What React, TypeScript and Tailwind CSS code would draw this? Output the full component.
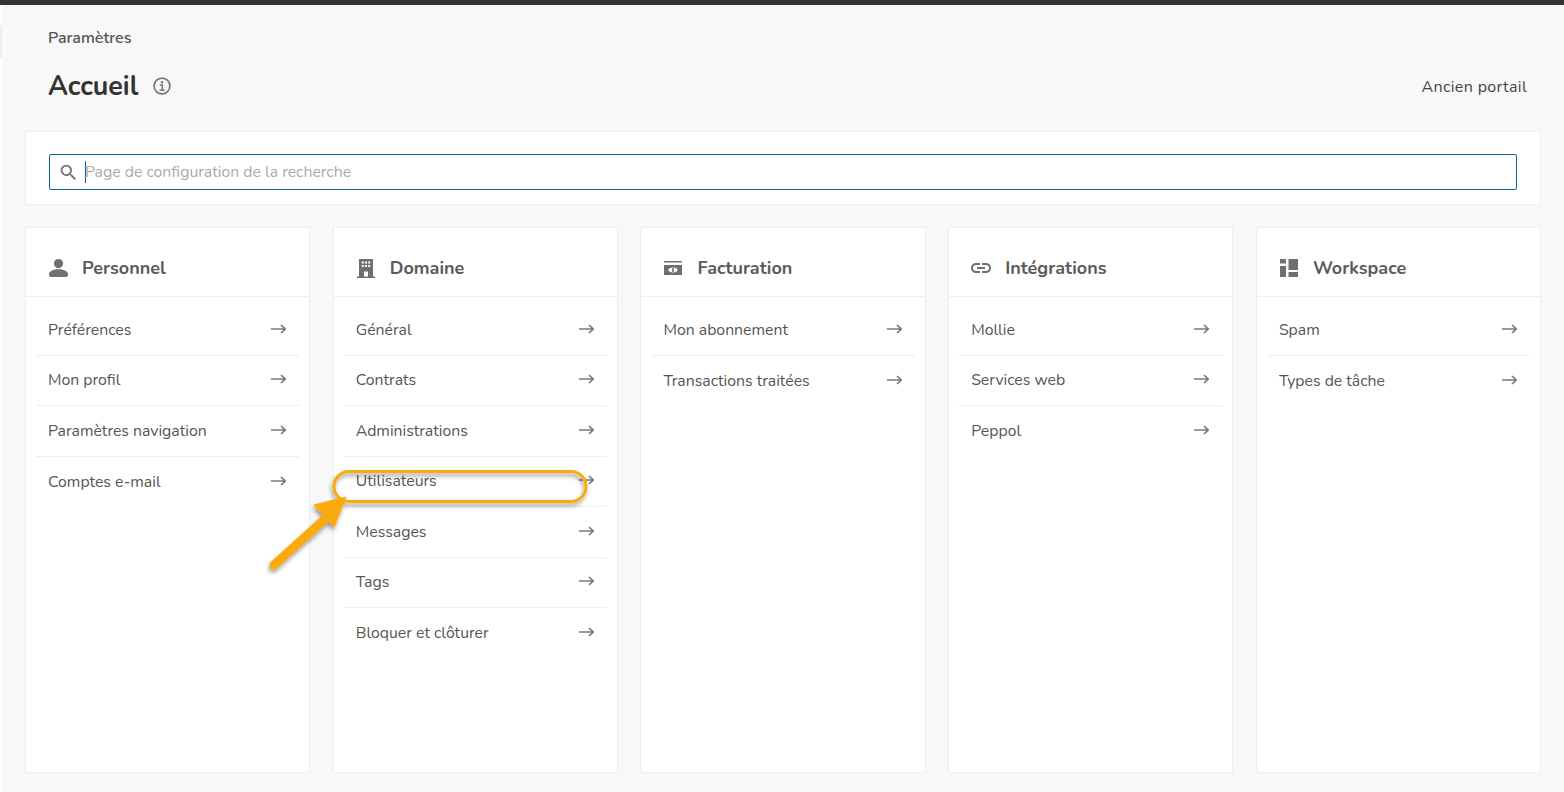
import React from 'react';
import { MdLink, MdSearch } from 'react-icons/md';

const PersonIcon = () => (
  <svg width="19" height="18" viewBox="0 0 19 18" fill="#6f6f6f">
    <circle cx="9.5" cy="4.6" r="4.6" />
    <path d="M0 16v-1c0-3 5-4.8 9.5-4.8S19 12 19 15v1a2 2 0 0 1-2 2H2a2 2 0 0 1-2-2z" />
  </svg>
);

const BuildingIcon = () => (
  <svg width="18" height="19" viewBox="0 0 18 19" fill="#6f6f6f">
    <path fillRule="evenodd" d="M2 0h14v17.5h2V19H0v-1.5h2V0zm2.8 2.4v2h2v-2h-2zm3.2 0v2h2v-2H8zm3.2 0v2h2v-2h-2zM4.8 6v2h2V6h-2zM8 6v2h2V6H8zm3.2 0v2h2V6h-2zM7 12.5v5h4v-5H7z" />
  </svg>
);

const BillingIcon = () => (
  <svg width="18" height="14" viewBox="0 0 18 14" fill="#6f6f6f">
    <rect x="0" y="0" width="18" height="1.5" />
    <path fillRule="evenodd" d="M0 4h18v10H0V4zm9 2.6c-2.6 0-4.6 1-4.6 2.4s2 2.4 4.6 2.4 4.6-1 4.6-2.4-2-2.4-4.6-2.4z" />
    <rect x="8.2" y="7" width="1.6" height="4" />
  </svg>
);

const WorkspaceIcon = () => (
  <svg width="18" height="18" viewBox="0 0 18 18" fill="#6f6f6f">
    <rect x="0" y="0" width="6" height="4.5" />
    <rect x="0" y="7" width="6" height="11" />
    <rect x="8.5" y="0" width="9.5" height="11" />
    <rect x="8.5" y="13" width="9.5" height="5" />
  </svg>
);

const InfoIcon = () => (
  <svg width="18" height="18" viewBox="0 0 18 18" fill="none" stroke="#777" strokeWidth="1.7">
    <circle cx="9" cy="9" r="7.9" />
    <circle cx="9" cy="5.2" r="1.2" fill="#777" stroke="none" />
    <path d="M6.8 8h2.5v5M6.6 13.2h5" strokeWidth="1.5" />
  </svg>
);

const RowArrow = () => (
  <svg width="15" height="10" viewBox="0 0 15 10" fill="none" stroke="#7a7a7a" strokeWidth="1.7" className="-mt-[2px]">
    <path d="M0 5H14M10 1L14.2 5L10 9" />
  </svg>
);

const COLUMNS = [
  { title: 'Personnel', icon: <PersonIcon />, items: ['Préférences', 'Mon profil', 'Paramètres navigation', 'Comptes e-mail'] },
  { title: 'Domaine', icon: <BuildingIcon />, items: ['Général', 'Contrats', 'Administrations', 'Utilisateurs', 'Messages', 'Tags', 'Bloquer et clôturer'] },
  { title: 'Facturation', icon: <BillingIcon />, items: ['Mon abonnement', 'Transactions traitées'] },
  { title: 'Intégrations', icon: <MdLink size={24} color="#6f6f6f" className="shrink-0" />, items: ['Mollie', 'Services web', 'Peppol'] },
  { title: 'Workspace', icon: <WorkspaceIcon />, items: ['Spam', 'Types de tâche'] },
];

function Annotation() {
  return (
    <svg className="absolute left-0 top-0 pointer-events-none" width="1564" height="792" viewBox="0 0 1564 792" fill="none">
      <defs>
        <filter id="shade" x="-20%" y="-40%" width="140%" height="180%">
          <feDropShadow dx="-1" dy="3" stdDeviation="2" floodColor="#000" floodOpacity="0.4" />
        </filter>
      </defs>
      <g filter="url(#shade)">
        <rect x="334" y="471.5" width="252" height="30" rx="15" stroke="#f9ab0b" strokeWidth="3" />
        <path d="M274 565L325 519" stroke="#f9ab0b" strokeWidth="9" strokeLinecap="round" />
        <path d="M346 497L314 505L334 527Z" fill="#f9ab0b" stroke="#f9ab0b" strokeWidth="1" strokeLinejoin="round" />
      </g>
    </svg>
  );
}

export default function App() {
  return (
    <div className="relative h-screen overflow-hidden bg-[#f8f8f8] text-[#4d4d4d] font-['Nunito','Noto_Sans',sans-serif]">
      <div className="h-[5px] bg-[#333333]" />
      <div className="flex">
        <div className="w-[2px] shrink-0 h-[787px] bg-white">
          <div className="mt-[20px] h-[33px] bg-[#eeeeee]" />
        </div>
        <main className="flex-1 min-w-0 pl-[23px] pr-[23px]">
          <div className="pl-[23px] pt-[23px] text-[16px] font-semibold leading-[20px] text-[#555555]">Paramètres</div>
          <div className="flex items-center justify-between pl-[23px] pr-[14px] mt-[18px] h-[40px]">
            <div className="flex items-center gap-[15px]">
              <h1 className="text-[26.8px] font-bold text-[#333333] leading-[40px]">Accueil</h1>
              <InfoIcon />
            </div>
            <span className="pt-[2px] text-[16px] tracking-[0.35px] text-[#444444]">Ancien portail</span>
          </div>
          <div className="mt-[25px] h-[74px] bg-white border border-[#eeeeee] rounded-[2px] px-[23px] pt-[22px]">
            <div className="flex items-center h-[36px] border border-[#05649f] rounded-[2px] pl-[8px] bg-white">
              <MdSearch size={21} color="#707070" className="shrink-0" />
              <span className="ml-[6px] w-px h-[22px] bg-[#05649f]" />
              <input
                readOnly
                placeholder="Page de configuration de la recherche"
                className="flex-1 -ml-px pt-[2px] bg-transparent outline-none text-[15.8px] placeholder:text-[#aaaaaa]"
              />
            </div>
          </div>
          <div className="mt-[22px] grid grid-cols-5 gap-[22.6px] h-[546px]">
            {COLUMNS.map((col) => (
              <section key={col.title} className="bg-white border border-[#eeeeee] rounded-[2px]">
                <header className="flex items-center h-[69px] border-b border-[#eeeeee] pl-[21px] pt-[12px]">
                  <span className="flex items-center justify-center w-[22px] h-[28px]">{col.icon}</span>
                  <h2 className="ml-[13px] text-[18px] font-bold text-[#5a5a5a]">{col.title}</h2>
                </header>
                <ul className="px-[10px] pt-[8px]">
                  {col.items.map((item, i) => (
                    <li
                      key={item}
                      className={`flex items-center justify-between h-[50.5px] pl-[12px] pr-[13px] text-[15.8px] text-[#555555] ${i < col.items.length - 1 ? 'border-b border-[#eeeeee]' : ''}`}
                    >
                      <span className="pt-[2px]">{item}</span>
                      <RowArrow />
                    </li>
                  ))}
                </ul>
              </section>
            ))}
          </div>
        </main>
      </div>
      <Annotation />
    </div>
  );
}
